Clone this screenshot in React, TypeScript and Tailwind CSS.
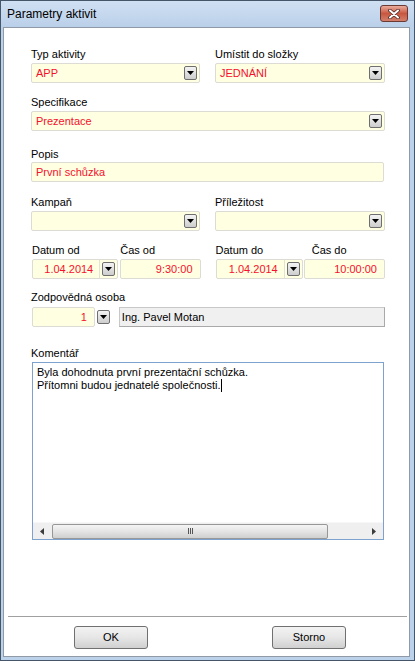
import React from "react";

const red = "text-[#f5102e]";

const Arrow = () => (
  <svg width="7" height="4" viewBox="0 0 7 4">
    <path d="M0 0h7L3.5 4z" fill="#000" />
  </svg>
);

const DropBtn = () => (
  <div className="w-[13px] h-[14px] shrink-0 rounded-[2px] border border-[#6f6f6f] bg-linear-to-b from-[#f4f4f4] to-[#cdcdcd] flex items-center justify-center">
    <Arrow />
  </div>
);

const Label = ({ children, className = "" }: { children: React.ReactNode; className?: string }) => (
  <div className={`h-[14px] leading-[14px] text-black ${className}`}>{children}</div>
);

const Combo = ({ value = "", className = "" }: { value?: string; className?: string }) => (
  <div className={`h-[20px] border border-[#dcdcd4] rounded-[2px] bg-[#ffffe1] flex items-center pl-[4px] pr-[2px] ${className}`}>
    <span className={`flex-1 ${red}`}>{value}</span>
    <DropBtn />
  </div>
);

const TextBox = ({ value, align = "left", className = "" }: { value: string; align?: "left" | "right"; className?: string }) => (
  <div
    className={`h-[20px] border border-[#dcdcd4] rounded-[2px] bg-[#ffffe1] flex items-center ${
      align === "right" ? "justify-end pr-[7px]" : "pl-[4px]"
    } ${red} ${className}`}
  >
    {value}
  </div>
);

const DateBox = ({ value, className = "" }: { value: string; className?: string }) => (
  <div className={`h-[20px] border border-[#dcdcd4] rounded-[2px] bg-[#ffffe1] flex items-center ${className}`}>
    <span className={`flex-1 text-right pr-[6px] ${red}`}>{value}</span>
    <div className="w-px self-stretch bg-[#e2e2da]" />
    <div className="ml-[2px] mr-[2px]">
      <DropBtn />
    </div>
  </div>
);

const WinButton = ({ children }: { children: React.ReactNode }) => (
  <div className="w-[74px] h-[23px] rounded-[3px] border border-[#707070] bg-linear-to-b from-[#f3f3f3] via-[#e6e6e6] to-[#d0d0d0] flex items-center justify-center text-black">
    {children}
  </div>
);

export default function App() {
  return (
    <div className="w-[415px] h-[661px] flex flex-col bg-[#bcd2ea] border border-[#46566a] font-['Liberation_Sans',Arial,sans-serif] text-[11px]">
      {/* title bar */}
      <div className="h-[26px] shrink-0 flex items-start justify-between pl-[6px] pr-[6px] bg-linear-to-b from-[#d0e0f3] to-[#bad0e9]">
        <span className="text-[12px] leading-[26px] text-black">Parametry aktivit</span>
        <div className="mt-[4px] w-[28px] h-[17px] rounded-[3px] border border-[#6a3a33] bg-linear-to-b from-[#e9ab9d] via-[#c85740] to-[#d2806c] flex items-center justify-center">
          <svg width="12" height="10" viewBox="0 0 12 10">
            <path d="M2 1.5L10 8.5M10 1.5L2 8.5" stroke="#4a2a26" strokeWidth="3.6" strokeLinecap="round" />
            <path d="M2 1.5L10 8.5M10 1.5L2 8.5" stroke="#fff" strokeWidth="2" strokeLinecap="round" />
          </svg>
        </div>
      </div>

      {/* client area */}
      <div className="flex-1 ml-[2px] mr-[4px] mb-[3px] border border-[#8f9aa6] bg-white flex flex-col">
        <div className="pl-[27px] pt-[19px] w-[381px] flex flex-col">
          {/* row 1 */}
          <div className="flex gap-[15px]">
            <div className="w-[169px]">
              <Label>Typ aktivity</Label>
              <Combo value="APP" className="mt-[2px]" />
            </div>
            <div className="w-[170px]">
              <Label>Umístit do složky</Label>
              <Combo value="JEDNÁNÍ" className="mt-[2px]" />
            </div>
          </div>

          {/* specifikace */}
          <Label className="mt-[12px]">Specifikace</Label>
          <Combo value="Prezentace" className="mt-[2px] w-[354px]" />

          {/* popis */}
          <Label className="mt-[16px]">Popis</Label>
          <TextBox value="První schůzka" className="mt-[1px] w-[353px]" />

          {/* kampan */}
          <div className="flex gap-[15px] mt-[13px]">
            <div className="w-[169px]">
              <Label>Kampaň</Label>
              <Combo className="mt-[2px]" />
            </div>
            <div className="w-[170px]">
              <Label>Příležitost</Label>
              <Combo className="mt-[2px]" />
            </div>
          </div>

          {/* dates */}
          <div className="flex mt-[12px]">
            <div className="w-[87px] ml-[1px]">
              <Label>Datum od</Label>
              <DateBox value="1.04.2014" className="mt-[2px]" />
            </div>
            <div className="w-[81px] ml-[2px]">
              <Label>Čas od</Label>
              <TextBox value="9:30:00" align="right" className="mt-[2px]" />
            </div>
            <div className="w-[88px] ml-[15px]">
              <Label>Datum do</Label>
              <DateBox value="1.04.2014" className="mt-[2px]" />
            </div>
            <div className="w-[82px] ml-px">
              <Label className="pl-[8px]">Čas do</Label>
              <TextBox value="10:00:00" align="right" className="mt-[2px]" />
            </div>
          </div>

          {/* zodpovedna osoba */}
          <Label className="mt-[11px]">Zodpovědná osoba</Label>
          <div className="flex items-center mt-[3px]">
            <TextBox value="1" align="right" className="w-[63px] ml-[1px]" />
            <div className="ml-[2px]">
              <DropBtn />
            </div>
            <div className="ml-[9px] w-[267px] h-[20px] border border-[#a9a9a9] border-t-[#c8c8c8] border-l-[#c8c8c8] bg-[#f0f0f0] flex items-center pl-[2px] text-black">
              Ing. Pavel Motan
            </div>
          </div>

          {/* komentar */}
          <Label className="mt-[19px]">Komentář</Label>
          <div className="mt-[2px] ml-[1px] w-[352px] h-[178px] border border-[#7da2ce] bg-white flex flex-col">
            <div className="flex-1 pl-[4px] pt-[3px] leading-[13px] text-black">
              <div>Byla dohodnuta první prezentační schůzka.</div>
              <div className="flex items-center">
                Přítomni budou jednatelé společnosti.
                <span className="inline-block w-px h-[13px] bg-black ml-px" />
              </div>
            </div>
            {/* horizontal scrollbar */}
            <div className="h-[17px] bg-[#efefef] border-t border-[#f7f7f7] flex items-center">
              <div className="w-[18px] flex items-center justify-center">
                <svg width="4" height="7" viewBox="0 0 4 7">
                  <path d="M4 0v7L0 3.5z" fill="#3c3c3c" />
                </svg>
              </div>
              <div className="ml-[1px] w-[276px] h-[15px] rounded-[2px] border border-[#979797] bg-linear-to-b from-[#f4f4f4] via-[#e4e4e4] to-[#cfcfcf] flex items-center justify-center gap-px">
                <div className="w-px h-[6px] bg-[#555]" />
                <div className="w-px h-[6px] bg-[#555]" />
                <div className="w-px h-[6px] bg-[#555]" />
              </div>
              <div className="flex-1" />
              <div className="w-[18px] flex items-center justify-center">
                <svg width="4" height="7" viewBox="0 0 4 7">
                  <path d="M0 0v7L4 3.5z" fill="#3c3c3c" />
                </svg>
              </div>
            </div>
          </div>
        </div>

        {/* separator */}
        <div className="mt-[76px] ml-[4px] mr-[2px] h-px bg-[#a0a0a0]" />

        {/* buttons */}
        <div className="flex mt-[9px] ml-[70px] gap-[124px]">
          <WinButton>OK</WinButton>
          <WinButton>Storno</WinButton>
        </div>
      </div>
    </div>
  );
}
